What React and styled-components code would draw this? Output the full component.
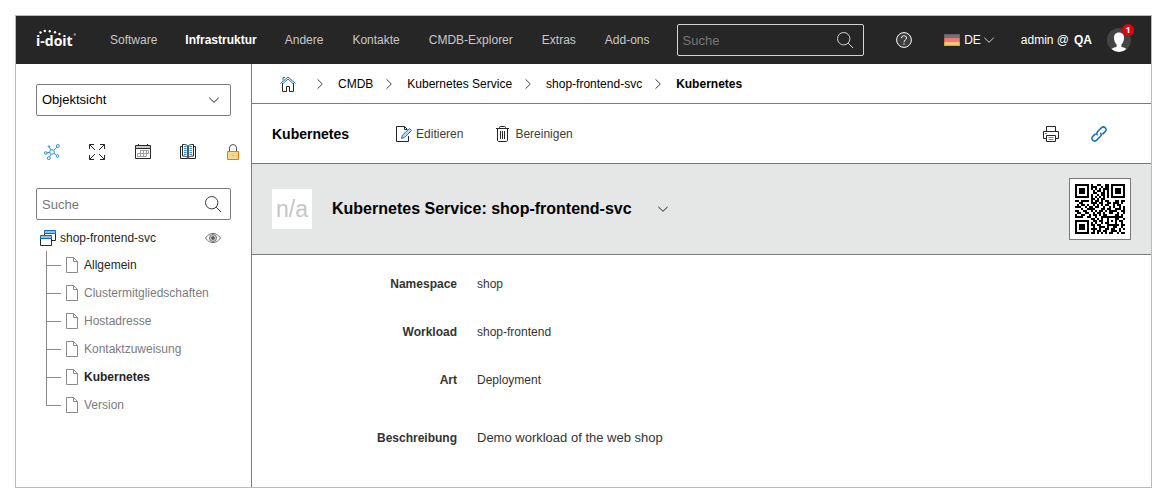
import React from 'react';
import styled, { createGlobalStyle, css } from 'styled-components';

const GlobalStyle = createGlobalStyle`
*{
	box-sizing:border-box;
}

body{
	margin:0;
	background:#fff;
	color:#262626;
	font-family:"Liberation Sans", Arial, sans-serif;
	font-size:12px;
	line-height:16px;
}

button, input, select{
	font-family:inherit;
	font-size:inherit;
	line-height:inherit;
	color:inherit;
	margin:0;
	padding:0;
	border:0;
	background:none;
}

svg{
	display:block;
	flex:none;
}
`

const Frame = styled.div`
	display:flex;
	flex-direction:column;
	min-height:calc(100vh - 30px);
	margin:15px;
	border:1px solid #b9bcbb;
`

const Header = styled.header`
	display:flex;
	align-items:center;
	height:48px;
	padding:0 20px;
	background:#262626;
	color:#fff;
`

const LogoLink = styled.a`
	margin-right:33px;
`

const Nav = styled.nav`
	display:flex;
	gap:29px;
	margin-right:27px;
`

const NavLink = styled.a`
	color:${props => props.$active ? '#fff' : '#c8c8c8'};
	font-weight:${props => props.$active ? 'bold' : 'normal'};
	text-decoration:none;
	white-space:nowrap;
	margin:${props => props.$active ? '0 -1px' : '0'};
`

const SearchBox = styled.label`
	display:flex;
	align-items:center;
	height:32px;
	padding:0 9px 0 5px;
	border:1px solid ${props => props.$dark ? '#d4d6d5' : '#7a7a7d'};
	border-radius:2px;
	${props => props.$dark && css`
		flex:none;
		width:187px;
		padding-right:10px;
	`}
`

const SearchInput = styled.input`
	flex:1;
	min-width:0;
	padding-top:1px;
	font-size:13px;
	outline:none;

	&::placeholder{
		color:#777;
		opacity:1;
	}
`

const HeaderTools = styled.div`
	display:flex;
	align-items:center;
	margin-left:auto;
	white-space:nowrap;

	b{
		margin-left:5px;
	}
`

const IconButton = styled.button`
	display:flex;
	align-items:center;
	gap:4px;
	cursor:pointer;
`

const LangButton = styled(IconButton)`
	gap:0;
	margin:0 24px 0 32px;

	span{
		margin-left:4px;
	}
`

const Avatar = styled.button`
	position:relative;
	margin-left:15px;
	cursor:pointer;
`

const Badge = styled.span`
	position:absolute;
	top:-4px;
	right:-3px;
	width:12px;
	height:12px;
	border-radius:6px;
	background:#e3000f;
	color:#fff;
	font-family:"Open Sans", sans-serif;
	font-size:9px;
	font-weight:bold;
	line-height:12px;
	text-align:center;
`

const Body = styled.div`
	display:flex;
	flex:1;
`

const Sidebar = styled.aside`
	flex:none;
	width:236px;
	padding:20px;
	border-right:1px solid #7a7a7d;
`

const SelectBox = styled.div`
	position:relative;
	color:#000;

	select{
		appearance:none;
		width:100%;
		height:32px;
		padding:0 30px 0 5px;
		border:1px solid #7a7a7d;
		border-radius:2px;
		font-size:13px;
	}

	svg{
		position:absolute;
		right:9px;
		top:8px;
		pointer-events:none;
	}
`

const ViewIcons = styled.div`
	display:flex;
	justify-content:space-between;
	margin:28px -10px 28px 8px;
`

const TreeRoot = styled.div`
	display:flex;
	align-items:center;
	gap:4px;
	height:20px;
	margin-top:8px;
	padding:0 10px 0 4px;

	button{
		margin-left:auto;
	}
`

const TreeLink = styled.a`
	color:${props => props.$dim ? '#7b7b7d' : '#262626'};
	font-weight:${props => props.$active ? 'bold' : 'normal'};
	text-decoration:none;
`

const Tree = styled.ul`
	list-style:none;
	margin:3px 0 0;
	padding:0 0 0 10px;
`

const TreeItem = styled.li`
	position:relative;
	display:flex;
	align-items:center;
	gap:6px;
	height:28px;
	padding-left:20px;

	&::before{
		content:"";
		position:absolute;
		left:0;
		top:0;
		width:14px;
		height:14px;
		border-left:1px solid #8a8a8c;
		border-bottom:1px solid #8a8a8c;
	}

	&:not(:last-child)::after{
		content:"";
		position:absolute;
		left:0;
		top:14px;
		bottom:0;
		border-left:1px solid #8a8a8c;
	}
`

const Main = styled.main`
	flex:1;
	min-width:0;
`

const Breadcrumb = styled.nav`
	display:flex;
	align-items:center;
	height:40px;
	padding-left:28px;
	border-bottom:1px solid #7a7a7d;
	white-space:nowrap;
	color:#000;

	a{
		color:#000;
		text-decoration:none;
	}

	a + svg{
		margin:0 10px 0 8px;
	}

	a:first-child + svg{
		margin-left:16px;
	}
`

const Toolbar = styled.div`
	display:flex;
	align-items:center;
	gap:32px;
	height:60px;
	padding:0 44px 0 20px;
	border-bottom:1px solid #7a7a7d;
	color:#3c3c3c;

	h1{
		margin:0 15px 0 0;
		font-size:14px;
		color:#000;
	}
`

const Spacer = styled.div`
	flex:1;
`

const TitleBar = styled.div`
	display:flex;
	align-items:center;
	gap:20px;
	padding:14px 20px;
	border-bottom:1px solid #7a7a7d;
	background:#e5e7e6;
	color:#000;

	h2{
		margin:0 3px 0 0;
		font-size:16px;
	}
`

const NoImage = styled.div`
	width:40px;
	height:40px;
	background:#fff;
	color:#c6c6c6;
	font-size:23px;
	line-height:40px;
	text-align:center;
`

const QrBox = styled.div`
	margin-left:auto;
	padding:5px;
	border:1px solid #7a7a7d;
	background:#fff;
`

const Details = styled.dl`
	display:grid;
	grid-template-columns:205px 1fr;
	column-gap:20px;
	row-gap:32px;
	margin:0;
	padding:21px 20px 0 0;
	color:#333;

	dt{
		text-align:right;
		font-weight:bold;
	}

	dd{
		margin:0;
	}
`

const DescriptionLabel = styled.dt`
	padding-top:10px;
`

const Description = styled.dd`
	padding-top:10px;
	font-size:13px;
`

const Icon = ({ children, color = '#262626' }) => (
	<svg width="16" height="16" viewBox="0 0 16 16" fill="none" stroke={color} aria-hidden="true">
		{children}
	</svg>
)

const Logo = () => (
	<svg width="41" height="22" viewBox="0 0 41 22" fill="#fff">
		<text x="0" y="17" fontFamily="Open Sans" fontSize="14" fontWeight="bold">i-doit</text>
		<circle cx="4.5" cy="3.5" r="1.2" />
		<circle cx="8.8" cy="2" r="1.2" />
		<circle cx="13.8" cy="2.2" r="1.2" />
		<circle cx="19" cy="3.2" r="1.2" />
		<circle cx="23.5" cy="5" r="1.2" />
		<circle cx="38.8" cy="5.5" r="1.2" fill="#8c8c8c" />
	</svg>
)

const SearchIcon = ({ color }) => (
	<Icon color={color}>
		<circle cx="6.7" cy="6.7" r="6.2" />
		<path d="M11.2 11.2 16 16" />
	</Icon>
)

const ChevronDown = ({ color = '#262626' }) => (
	<Icon color={color}><path d="M3.3 5.8 8 10.3l4.7-4.5" /></Icon>
)

const ChevronRight = () => (
	<Icon color="#3c3c3c"><path d="M5.5 3.3 10.3 8l-4.8 4.7" /></Icon>
)

const HelpIcon = () => (
	<Icon color="#fff">
		<circle cx="8" cy="8" r="7.4" fill="#3d3d3d" />
		<path d="M5.5 6.2c0-3.2 5-3.3 5-.2 0 2-2.5 2-2.5 4.3M8 11.5v1.3" />
	</Icon>
)

const Flag = () => (
	<svg width="16" height="12" viewBox="0 0 16 12">
		<path d="M0 0h16v4H0z" fill="#727272" />
		<path d="M0 4h16v4H0z" fill="#f5737b" />
		<path d="M0 8h16v4H0z" fill="#f5c66c" />
		<path d="M.5.5h15v11H.5z" fill="none" stroke="#000" strokeOpacity=".15" />
	</svg>
)

const Person = () => (
	<svg width="24" height="24" viewBox="0 0 24 24">
		<circle cx="12" cy="12" r="12" fill="#444" />
		<path d="M12 4.5c3.6 0 5 2.3 5 5.2 0 3.4-1.4 5.3-2.7 7l.2 2.2c2 .5 3.7.9 5 2A12 12 0 0 1 12 24a12 12 0 0 1-7.5-3.1c1.3-1.1 3-1.5 5-2l.2-2.2C8.4 15 7 13.1 7 9.7c0-2.9 1.4-5.2 5-5.2z" fill="#fff" />
	</svg>
)

const NetworkIcon = () => (
	<Icon color="#2f8fd0">
		<circle cx="8" cy="8" r="2.3" />
		<circle cx="13.8" cy="2" r="1.5" />
		<circle cx="1.8" cy="9" r="1.3" />
		<circle cx="4.8" cy="14.2" r="1.5" />
		<circle cx="13.5" cy="12" r="1.3" />
		<circle cx="5" cy="2.5" r=".8" />
		<path d="M9.7 6.4 12.8 3.2M5.8 8.3 3 8.8M7 10.2l-1.5 2.7M10 9.3l2.4 1.9M7 6 5.3 3.3" />
	</Icon>
)

const ExpandIcon = () => (
	<Icon>
		<path d="M.5 5V.5H5M.5.5 6 6M11 .5h4.5V5M15.5.5 10 6M.5 11v4.5H5M.5 15.5 6 10M15.5 11v4.5H11M15.5 15.5 10 10" />
	</Icon>
)

const CalendarIcon = () => (
	<Icon>
		<path d="M.5 1.5h15v3H.5z" fill="#c8cac9" />
		<path d="M.5 4.5v10h15v-10M3.5 0v1.5M12.5 0v1.5" />
		<path d="M5 6.5h8.5M2 9.5h11.5M2 12.5h9M5.5 6.5v6M8.5 6.5v6M11.5 6.5v6M13.5 6.5v3M2.5 9.5v3" stroke="#a0a0a2" />
	</Icon>
)

const BookIcon = () => (
	<Icon>
		<path d="M2.5 2.5h-2v12h15v-12h-2" />
		<path d="M7.5 13.5c-1-1-2.5-1.5-5-1.5V.5c2.5 0 4 .2 5 1M8.5 13.5c1-1 2.5-1.5 5-1.5V.5c-2.5 0-4 .2-5 1" />
		<path d="M7.5 1.5v13M8.5 1.5v13" stroke="#55565a" />
		<path d="M4 2.5h2.5M4 4.5h2.5M4 6.5h2.5M4 8.5h2.5M4 10.5h2.5M9.5 2.5H12M9.5 4.5H12M9.5 6.5H12M9.5 8.5H12M9.5 10.5H12" stroke="#2f8fd0" />
	</Icon>
)

const LockIcon = () => (
	<Icon color="#e87722">
		<path d="M4.5 7V4a3.5 3.5 0 0 1 7 0v3" stroke="#55565a" />
		<path d="M2.5 7.5h11v8h-11z" fill="#f8d98b" />
		<path d="M7.5 11.5h1" />
	</Icon>
)

const WindowsIcon = () => (
	<Icon color="#0f6bb5">
		<path d="M15.5 3.5v7H12M4.5 3.5v2" stroke="#262626" />
		<path d="M4.5.5h11v3h-11z" fill="#8fc4ea" />
		<path d="M.5 8.5v7h11v-7" fill="#fff" stroke="#262626" />
		<path d="M.5 5.5h11v3H.5z" fill="#8fc4ea" />
	</Icon>
)

const EyeIcon = () => (
	<Icon color="#6a6b6f">
		<path d="M.5 8C3 4.5 5.5 3.500 8 3.500s5 1 7.500 4.500C13 11.500 10.500 12.500 8 12.500S3 11.500.5 8z" />
		<circle cx="8" cy="8" r="3.5" fill="#d8dad9" />
		<circle cx="8" cy="8" r="1.5" fill="#55565a" />
	</Icon>
)

const FileIcon = () => (
	<svg width="12" height="16" viewBox="0 0 12 16" fill="none" stroke="#8a8a8c">
		<path d="M.5.5h7l4 4v11H.5zM7.5.5v4h4" />
	</svg>
)

const HomeIcon = () => (
	<Icon>
		<path d="M2.5 7v8.5h4v-5h3v5h4V7" />
		<path d="M.5 7.5 8 1l7.5 6.5M3 4.5v-3h2M2.5 8 8 3l5.5 5" stroke="#1b6fb8" />
	</Icon>
)

const EditIcon = () => (
	<Icon>
		<path d="M12.5 10v5.5H.5V.5h8l3 3M8.5.5v3H11" />
		<path d="M5.5 12.5 6.5 9l7-6.5 2 2-7 7z" stroke="#1b6fb8" fill="#b5daf3" />
	</Icon>
)

const TrashIcon = () => (
	<Icon>
		<path d="M1 2.5h13M2.500 2.500V14c0 1 .5 1.500 1.500 1.500h7c1 0 1.500-.5 1.500-1.500V2.500M4.500 2.500v-1c0-.6.4-1 1-1h4c.6 0 1 .4 1 1v1M5.500 5v8M7.500 5v8M9.500 5v8" />
	</Icon>
)

const PrinterIcon = () => (
	<Icon>
		<path d="M3.5 5V.5h9V5M3.5 12.5h-3v-7h15v7h-3M3.5 9.5h9v6h-9z" />
		<path d="M5.5 11.5h5M5.5 13.5h5" stroke="#8a8a8c" />
		<path d="M2 7.5h2" stroke="#2f8fd0" />
	</Icon>
)

const LinkIcon = () => (
	<Icon color="#1b6fb8">
		<path d="M6.7 9.3a2.7 2.7 0 0 1 0-3.8l3.9-3.9a2.7 2.7 0 0 1 3.8 3.8l-3 3" strokeWidth="1.5" />
		<path d="M9.3 6.7a2.7 2.7 0 0 1 0 3.8l-3.9 3.9a2.7 2.7 0 0 1-3.8-3.8l3-3" strokeWidth="1.5" />
	</Icon>
)

const qrRows = [
	'#######.#..##..##.#######',
	'#.....#.###..#.##.#.....#',
	'#.###.#.#.#.#.###.#.###.#',
	'#.###.#..#.##.#.#.#.###.#',
	'#.###.#..##..##.#.#.###.#',
	'#.....#.#..#.##.#.#.....#',
	'#######.#.#.#.#.#.#######',
	'........##.#.##..........',
	'##.####.#.##.#.##...##.##',
	'..##....###.##..##.###.#.',
	'.#.##.#..#.#.#.##..#.##..',
	'###..#.##.##..#..#.#..#.#',
	'...#..####...##.##..###.#',
	'##..##..#.#.##.#.####..##',
	'.##..##..#.##.#..##..#..#',
	'#..##..#.##.#.##....##.#.',
	'####..##..#..###########.',
	'........##.#.#..#...##..#',
	'#######..##.##..#.#.#.##.',
	'#.....#.#.#..#.##...#..#.',
	'#.###.#.##.##...######.##',
	'#.###.#..#..###.#..##..#.',
	'#.###.#.###.#..##.##..#.#',
	'#.....#..#.##.##..###.#..',
	'#######.##.#.#.#.##..#.##'
]

const QrCode = () => (
	<svg width="50" height="50" viewBox="0 0 25 25" shapeRendering="crispEdges" role="img" aria-label="QR-Code">
		{qrRows.map((row, y) => row.split('').map((cell, x) => (
			cell === '#' && <rect key={`${x}-${y}`} x={x} y={y} width="1" height="1" />
		)))}
	</svg>
)

const navItems = ['Software', 'Infrastruktur', 'Andere', 'Kontakte', 'CMDB-Explorer', 'Extras', 'Add-ons']

const views = [
	['Netzwerk', NetworkIcon],
	['Vollbild', ExpandIcon],
	['Kalender', CalendarIcon],
	['Logbuch', BookIcon],
	['Rechte', LockIcon]
]

const categories = [
	{ name: 'Allgemein' },
	{ name: 'Clustermitgliedschaften', dim: true },
	{ name: 'Hostadresse', dim: true },
	{ name: 'Kontaktzuweisung', dim: true },
	{ name: 'Kubernetes', active: true },
	{ name: 'Version', dim: true }
]

const App = () => (
	<Frame>
		<GlobalStyle />
		<Header>
			<LogoLink href="#" aria-label="i-doit"><Logo /></LogoLink>
			<Nav>
				{navItems.map(item => (
					<NavLink key={item} href="#" $active={item === 'Infrastruktur'}>{item}</NavLink>
				))}
			</Nav>
			<SearchBox $dark>
				<SearchInput type="text" placeholder="Suche" aria-label="Globale Suche" />
				<SearchIcon color="#d4d6d5" />
			</SearchBox>
			<HeaderTools>
				<IconButton aria-label="Hilfe"><HelpIcon /></IconButton>
				<LangButton><Flag /><span>DE</span><ChevronDown color="#d4d6d5" /></LangButton>
				<span>admin @</span>
				<b>QA</b>
				<Avatar aria-label="Profil">
					<Person />
					<Badge>1</Badge>
				</Avatar>
			</HeaderTools>
		</Header>
		<Body>
			<Sidebar>
				<SelectBox>
					<select aria-label="Ansicht" defaultValue="Objektsicht">
						<option>Objektsicht</option>
					</select>
					<ChevronDown />
				</SelectBox>
				<ViewIcons>
					{views.map(([name, ViewIcon]) => (
						<IconButton key={name} aria-label={name}><ViewIcon /></IconButton>
					))}
				</ViewIcons>
				<SearchBox>
					<SearchInput type="text" placeholder="Suche" aria-label="Kategorien durchsuchen" />
					<SearchIcon color="#3c3c3c" />
				</SearchBox>
				<TreeRoot>
					<WindowsIcon />
					<TreeLink href="#">shop-frontend-svc</TreeLink>
					<IconButton aria-label="Leere Kategorien ausblenden"><EyeIcon /></IconButton>
				</TreeRoot>
				<Tree>
					{categories.map(({ name, dim, active }) => (
						<TreeItem key={name}>
							<FileIcon />
							<TreeLink href="#" $dim={dim} $active={active}>{name}</TreeLink>
						</TreeItem>
					))}
				</Tree>
			</Sidebar>
			<Main>
				<Breadcrumb>
					<a href="#" aria-label="Start"><HomeIcon /></a>
					<ChevronRight />
					<a href="#">CMDB</a>
					<ChevronRight />
					<a href="#">Kubernetes Service</a>
					<ChevronRight />
					<a href="#">shop-frontend-svc</a>
					<ChevronRight />
					<b>Kubernetes</b>
				</Breadcrumb>
				<Toolbar>
					<h1>Kubernetes</h1>
					<IconButton><EditIcon />Editieren</IconButton>
					<IconButton><TrashIcon />Bereinigen</IconButton>
					<Spacer />
					<IconButton aria-label="Drucken"><PrinterIcon /></IconButton>
					<IconButton aria-label="Link"><LinkIcon /></IconButton>
				</Toolbar>
				<TitleBar>
					<NoImage>n/a</NoImage>
					<h2>Kubernetes Service: shop-frontend-svc</h2>
					<IconButton aria-label="Details anzeigen"><ChevronDown /></IconButton>
					<QrBox><QrCode /></QrBox>
				</TitleBar>
				<Details>
					<dt>Namespace</dt>
					<dd>shop</dd>
					<dt>Workload</dt>
					<dd>shop-frontend</dd>
					<dt>Art</dt>
					<dd>Deployment</dd>
					<DescriptionLabel>Beschreibung</DescriptionLabel>
					<Description>Demo workload of the web shop</Description>
				</Details>
			</Main>
		</Body>
	</Frame>
)

export default App;
